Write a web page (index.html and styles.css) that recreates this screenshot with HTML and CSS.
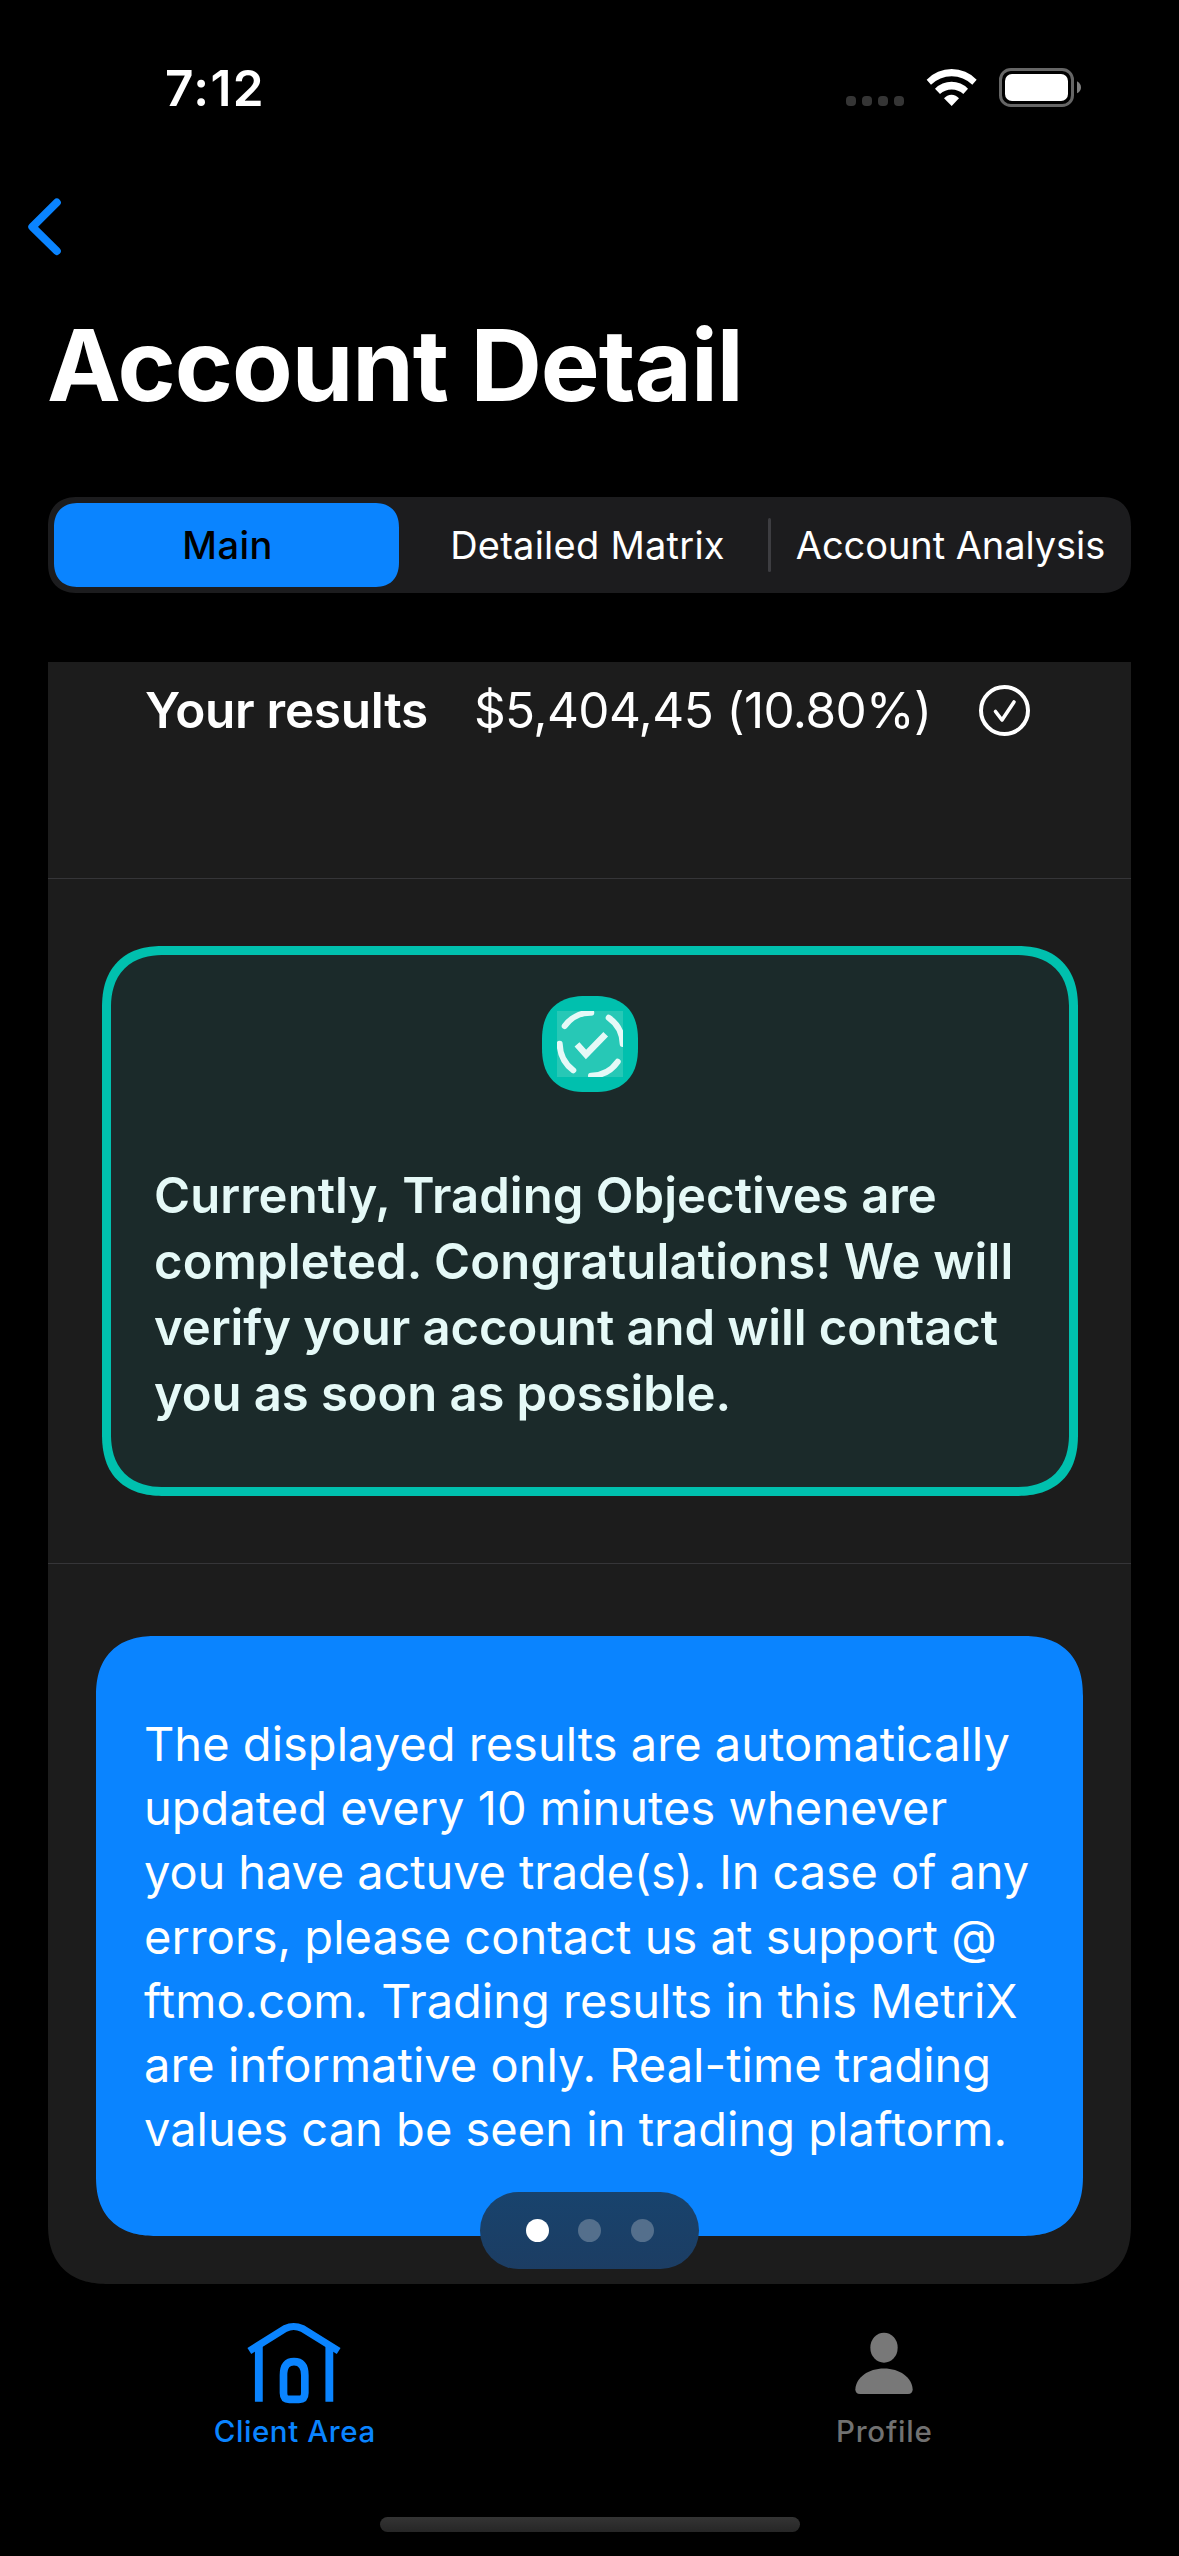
FILE: index.html
```html
<!DOCTYPE html>
<html lang="en">
<head>
<meta charset="utf-8">
<title>Account Detail</title>
<link rel="stylesheet" href="styles.css">
</head>
<body>
<div class="screen">
  <header class="status-bar">
    <span class="clock">7:12</span>
    <div class="status-icons">
      <div class="signal"><i></i><i></i><i></i><i></i></div>
      <svg class="wifi" viewBox="438 84 153 117" fill="#fff">
        <path d="M440 119A104 104 0 0 1 590 119L577 134A89 89 0 0 0 453 134Z"/>
        <path d="M465 146A70 70 0 0 1 564 146L550 162A52 52 0 0 0 480 162Z"/>
        <path d="M492 175A28.500 28.500 0 0 1 537 175L515 198Z"/>
      </svg>
      <svg class="battery" viewBox="657 84 249 117">
        <rect x="661.5" y="88.500" width="216" height="108" rx="31" fill="none" stroke="#666" stroke-width="9"/>
        <rect x="675" y="102" width="189" height="81" rx="21" fill="#fff"/>
        <path d="M891 124Q903 131 903 142Q903 154 891 160Z" fill="#808080"/>
      </svg>
    </div>
  </header>

  <nav class="nav-bar">
    <svg class="back" viewBox="0 0 34 58" fill="none" stroke="#0a84ff" stroke-width="8" stroke-linecap="round" stroke-linejoin="round"><path d="M28.800 4.500L4.300 28.800L28.800 53"/></svg>
  </nav>

  <h1 class="title">Account Detail</h1>

  <div class="segmented">
    <div class="segment selected">Main</div>
    <div class="segment matrix">Detailed Matrix</div>
    <span class="separator"></span>
    <div class="segment analysis">Account Analysis</div>
  </div>

  <main class="card">
    <section class="results">
      <span class="results-label">Your results</span>
      <span class="results-value">$5,404,45 (10.80%)</span>
      <svg class="results-check" viewBox="0 0 51 51" fill="none" stroke="#fff" stroke-linecap="round" stroke-linejoin="round">
        <circle cx="25.500" cy="25.500" r="23.500" stroke-width="4"/>
        <path d="M16.500 26.500L23 35L35 17" stroke-width="3.600"/>
      </svg>
    </section>

    <section class="objectives">
      <div class="success">
        <div class="success-icon">
          <svg viewBox="0 0 66 66" fill="none" stroke="#e5f9f7">
            <g stroke-width="6" stroke-linecap="round">
              <path d="M7.700 15A32 32 0 0 1 34.300 1.700"/>
              <path d="M51.700 6.700A33 33 0 0 1 65.700 33"/>
              <path d="M2.700 32.700A34 34 0 0 0 16.300 59.300"/>
              <path d="M60.700 50.700A33 33 0 0 1 34 64.700"/>
            </g>
            <path d="M20 33.300L29 43.500L48.700 23.200" stroke-width="6.500"/>
          </svg>
        </div>
        <p class="success-text">
          <span class="line">Currently, Trading Objectives are</span>
          <span class="line wide">completed. Congratulations! We will</span>
          <span class="line tight">verify your account and will contact</span>
          <span class="line tight">you as soon as possible.</span>
        </p>
      </div>
    </section>

    <section class="notice">
      <p class="notice-text">
        <span class="line">The displayed results are automatically</span>
        <span class="line">updated every 10 minutes whenever</span>
        <span class="line tight">you have actuve trade(s). In case of any</span>
        <span class="line">errors, please contact us at support @</span>
        <span class="line">ftmo.com. Trading results in this MetriX</span>
        <span class="line">are informative only. Real-time trading</span>
        <span class="line">values can be seen in trading plaftorm.</span>
      </p>
    </section>

    <div class="pager"><i class="dot active"></i><i class="dot"></i><i class="dot"></i></div>
  </main>

  <footer class="tab-bar">
    <div class="tab active">
      <svg class="tab-icon" viewBox="201 96 288 246" fill="none" stroke="#0a84ff">
        <path d="M208 183L316 115.500Q340.500 103.500 367 115.500L476 183" stroke-width="21.500"/>
        <path d="M236.500 168V335M448 168V335" stroke-width="23.500"/>
        <path d="M310.500 256C310.500 227 322 215 342 215S374.500 227 374.500 256V309Q374.500 328 357 328H328Q310.500 328 310.500 309Z" stroke-width="23"/>
      </svg>
      <span class="tab-label">Client Area</span>
    </div>
    <div class="tab">
      <svg class="tab-icon" viewBox="167 96 288 246" fill="#787878">
        <ellipse cx="311" cy="173" rx="41" ry="45"/>
        <path d="M239 312Q225 312 225 298C227 262 264 235.500 311 235.500S395 262 397 298Q397 312 383 312Z"/>
      </svg>
      <span class="tab-label profile">Profile</span>
    </div>
  </footer>
  <div class="home-indicator"></div>
</div>
</body>
</html>
```
FILE: styles.css
```css
* { box-sizing: border-box; margin: 0; padding: 0; }

body {
  background: #000;
  color: #fff;
  font-family: Inter, "Liberation Sans", sans-serif;
}

svg { display: block; flex: none; }

.screen {
  display: flex;
  flex-direction: column;
  width: 1179px;
  height: 2556px;
  overflow: hidden;
}

/* Status bar */
.status-bar {
  display: flex;
  justify-content: space-between;
  align-items: flex-start;
  height: 118px;
  padding: 58px 97px 0 165px;
}
.clock { font-size: 49.5px; line-height: 60px; font-weight: 600; letter-spacing: 1.4px; }
.status-icons { display: flex; align-items: flex-end; gap: 22px; padding-top: 10px; }
.signal { display: flex; gap: 6px; padding-bottom: 1px; }
.signal i { width: 10px; height: 10px; border-radius: 4px; background: #353535; }
.wifi { width: 51px; height: 39px; }
.battery { width: 83px; height: 39px; }

/* Navigation */
.nav-bar { height: 187px; padding: 80px 28px 0; }
.back { width: 34px; height: 58px; }

.title {
  padding-left: 47px;
  font-size: 99px;
  line-height: 120px;
  font-weight: 700;
  letter-spacing: -1.05px;
}

/* Segmented control */
.segmented {
  display: grid;
  grid-template-columns: 361px 359px 3px 360px;
  align-items: center;
  height: 96px;
  margin: 72px 48px 0;
  border-radius: 30px;
  corner-shape: superellipse(1.25);
  background: #1c1c1e;
}
.segment {
  font-size: 38px;
  line-height: 46px;
  text-align: center;
  white-space: nowrap;
}
.segment.matrix { padding-right: 2px; letter-spacing: 0.25px; }
.segment.analysis { padding-right: 1px; letter-spacing: -0.07px; }
.segment.selected {
  height: 84px;
  margin: 0 10px 0 6px;
  padding-left: 2px;
  border-radius: 25px;
  corner-shape: superellipse(1.25);
  background: #0a84ff;
  color: #000;
  font-weight: 500;
  letter-spacing: 0.4px;
  line-height: 84px;
}
.separator { height: 54px; border-radius: 2px; background: #3d3d41; }

/* Card */
.card {
  position: relative;
  height: 1622px;
  margin: 69px 48px 0;
  border-radius: 0 0 60px 60px;
  corner-shape: superellipse(1.25);
  background: #1c1c1c;
}
.results {
  display: flex;
  align-items: flex-start;
  height: 217px;
  padding: 18px 0 0 97px;
  border-bottom: 1px solid #353538;
  font-size: 49.5px;
  line-height: 60px;
  white-space: nowrap;
}
.results-label { font-weight: 600; letter-spacing: -0.28px; }
.results-value { margin-left: 46px; letter-spacing: -0.6px; }
.results-check { width: 51px; height: 51px; margin: 5px 0 0 47px; }

.objectives { padding: 67px 53px 67px 54px; border-bottom: 1px solid #353538; }
.success {
  height: 550px;
  padding: 41px 43px 0;
  border: 9px solid #00c0ae;
  border-radius: 62px;
  corner-shape: superellipse(1.25);
  background: #1b2a2a;
}
.success-icon {
  display: grid;
  place-items: center;
  width: 96px;
  height: 96px;
  margin: 0 auto;
  border-radius: 44px;
  corner-shape: superellipse(1.25);
  background: #00c0ae;
}
.success-icon svg { width: 66px; height: 66px; background: #27c8b6; }
.success-text {
  margin-top: 71px;
  color: #e5f9f7;
  font-size: 49px;
  font-weight: 600;
  line-height: 66px;
  letter-spacing: 0.05px;
}
.line { display: block; white-space: nowrap; }
.success-text .wide { letter-spacing: 0.17px; }
.success-text .tight { letter-spacing: -0.08px; }

.notice {
  height: 600px;
  margin: 72px 48px 0;
  padding: 76px 0 0 48px;
  border-radius: 60px;
  corner-shape: superellipse(1.25);
  background: #0a84ff;
}
.notice-text { font-size: 47px; line-height: 64.17px; letter-spacing: 0.02px; }
.notice-text .tight { letter-spacing: -0.12px; }

.pager {
  position: absolute;
  left: 432px;
  top: 1530px;
  display: flex;
  align-items: center;
  gap: 30px;
  width: 219px;
  height: 77px;
  padding-left: 46px;
  border-radius: 39px;
  background: linear-gradient(#18436d, #1c3d63);
}
.dot { width: 23px; height: 23px; border-radius: 50%; background: #546f8c; }
.dot.active { margin-right: -1px; background: #fff; }

/* Tab bar */
.tab-bar { display: flex; padding-top: 38px; }
.tab {
  flex: 1;
  display: flex;
  flex-direction: column;
  align-items: center;
  gap: 9px;
  color: #717171;
}
.tab.active { color: #0a84ff; }
.tab-icon { width: 96px; height: 82px; }
.tab-label { font-size: 29.5px; line-height: 36px; font-weight: 500; letter-spacing: 0.6px; }
.tab-label.profile { letter-spacing: 0.8px; }

.home-indicator {
  width: 420px;
  height: 15px;
  margin: auto auto 24px;
  border-radius: 8px;
  background: linear-gradient(#343434, #262626);
}
```
